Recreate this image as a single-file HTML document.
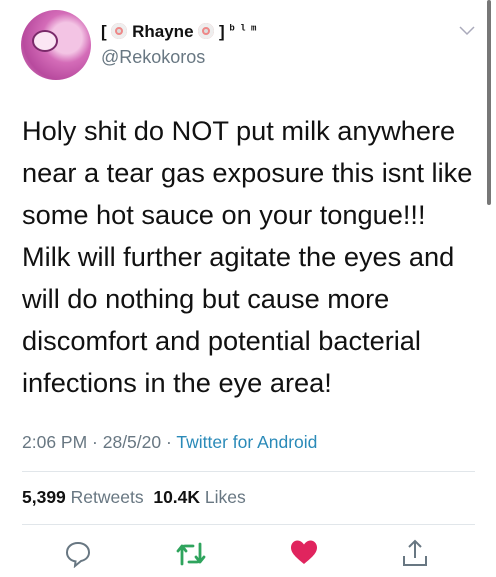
<!DOCTYPE html>
<html><head><style>
body{margin:0;width:496px;height:577px;background:#fff;font-family:"Liberation Sans",sans-serif;position:relative;overflow:hidden}
.a{position:absolute}
</style></head><body>
<div class="a" style="left:487px;top:0;width:4px;height:205px;background:#777;border-radius:2px"></div>
<div class="a" style="left:21px;top:10px;width:70px;height:70px;border-radius:50%;background:radial-gradient(circle at 65% 40%,#f3c4e4 0 25%,#d46cb8 40%,#b84a9e 70%,#e59ad0 100%)"></div>
<div class="a" style="left:32px;top:30px;width:22px;height:18px;border-radius:50%;background:#fbe6f4;border:2px solid #7a2a6a"></div>
<div class="a" style="left:101px;top:22px;font-size:17px;font-weight:bold;color:#111;white-space:nowrap">[ <span style="display:inline-block;width:16px;height:16px;border-radius:50%;background:#ddd;vertical-align:-2px;box-shadow:inset 0 0 0 4px #eee,inset 0 0 0 6px #e88"></span> Rhayne <span style="display:inline-block;width:16px;height:16px;border-radius:50%;background:#ddd;vertical-align:-2px;box-shadow:inset 0 0 0 4px #eee,inset 0 0 0 6px #e88"></span> ] <sup style="font-size:9px;font-family:'Liberation Mono',monospace">b l m</sup></div>
<div class="a" style="left:101px;top:47px;font-size:18px;color:#687782">@Rekokoros</div>
<svg class="a" style="left:459px;top:26px" width="16" height="10"><path d="M1 1 L8 8 L15 1" fill="none" stroke="#aab" stroke-width="1.5"/></svg>
<div class="a" style="left:22px;top:110px;font-size:27.2px;line-height:42px;color:#111;white-space:nowrap">Holy shit do NOT put milk anywhere<br>near a tear gas exposure this isnt like<br>some hot sauce on your tongue!!!<br>Milk will further agitate the eyes and<br>will do nothing but cause more<br>discomfort and potential bacterial<br>infections in the eye area!</div>
<div class="a" style="left:22px;top:432px;font-size:17.5px;color:#687782">2:06 PM · 28/5/20 · <span style="color:#2a8ab8">Twitter for Android</span></div>
<div class="a" style="left:22px;top:471px;width:453px;height:1px;background:#e1e6ea"></div>
<div class="a" style="left:22px;top:487px;font-size:17.5px;color:#687782"><b style="color:#111">5,399</b> Retweets &nbsp;<b style="color:#111">10.4K</b> Likes</div>
<div class="a" style="left:22px;top:524px;width:453px;height:1px;background:#e1e6ea"></div>
<svg class="a" style="left:64px;top:540px" width="28" height="28" viewBox="0 0 28 28"><path d="M14 3C7.5 3 3 7 3 12.5c0 4.7 3.6 8.2 8.5 8.9L11 26l6-5C22 20 25 16.5 25 12.5 25 7 20.5 3 14 3Z" fill="none" stroke="#687782" stroke-width="2"/></svg>
<svg class="a" style="left:176px;top:540px" width="30" height="28" viewBox="0 0 30 28"><path d="M6 24V9q0-3 3-3h8M2 11l4-5 4 5M24 4v15q0 3-3 3h-8M20 17l4 5 4-5" fill="none" stroke="#2fa45d" stroke-width="2.8" stroke-linecap="round" stroke-linejoin="round"/></svg>
<svg class="a" style="left:290px;top:539px" width="28" height="26" viewBox="0 0 28 26"><path d="M14 25C4 17 1 13 1 8.5 1 4.5 4 1.5 7.5 1.5 10.5 1.5 12.5 3.5 14 5.5 15.5 3.5 17.5 1.5 20.5 1.5 24 1.5 27 4.5 27 8.5 27 13 24 17 14 25Z" fill="#e0245e"/></svg>
<svg class="a" style="left:400px;top:538px" width="30" height="30" viewBox="0 0 30 30"><path d="M15 3v17M9 9l6-6 6 6M4 18v9h22v-9" fill="none" stroke="#687782" stroke-width="2"/></svg>
</body></html>
